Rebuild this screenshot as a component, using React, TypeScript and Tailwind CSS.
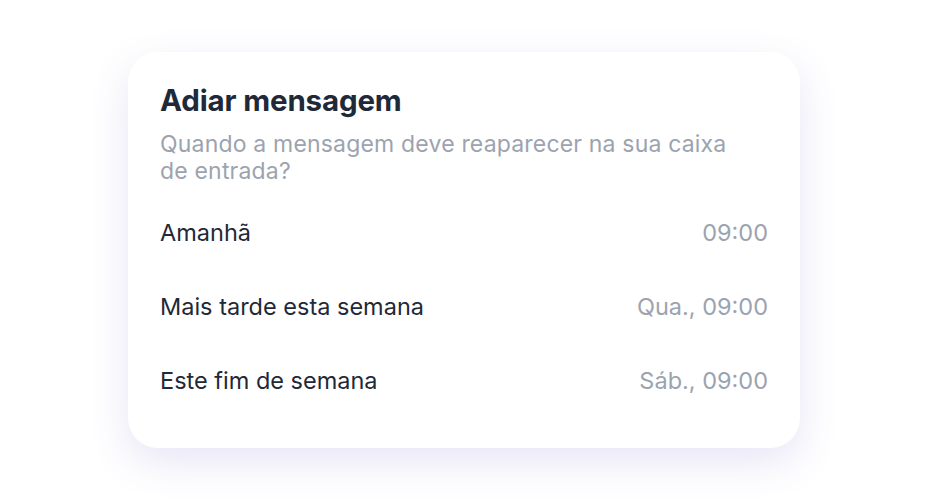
import React from 'react';

interface SnoozeOption {
  label: string;
  time: string;
}

const options: SnoozeOption[] = [
  { label: 'Amanhã', time: '09:00' },
  { label: 'Mais tarde esta semana', time: 'Qua., 09:00' },
  { label: 'Este fim de semana', time: 'Sáb., 09:00' },
];

export default function App() {
  return (
    <div
      className="flex h-[500px] w-full items-center justify-center bg-white"
      style={{ fontFamily: 'Inter, "Noto Sans", sans-serif' }}
    >
      <div className="flex h-[396px] w-[672px] flex-col rounded-[30px] bg-white px-8 pt-[30px] shadow-[0_14px_40px_rgba(84,72,190,0.14)]">
        <h2 className="text-[29.5px] leading-[36px] font-bold tracking-[-0.005em] text-[#1f2937]">
          Adiar mensagem
        </h2>
        <p className="mt-[13px] max-w-[590px] text-[23px] leading-[27px] tracking-[0.008em] text-[#9ca3af]">
          Quando a mensagem deve reaparecer na sua caixa de entrada?
        </p>

        <ul className="mt-[11px] flex flex-col">
          {options.map(opt => (
            <li key={opt.label} className="flex h-[74px] items-center justify-between">
              <span className="text-[23.5px] text-[#1f2937]">{opt.label}</span>
              <span className="text-[23.5px] text-[#9ca3af]">{opt.time}</span>
            </li>
          ))}
        </ul>
      </div>
    </div>
  );
}
